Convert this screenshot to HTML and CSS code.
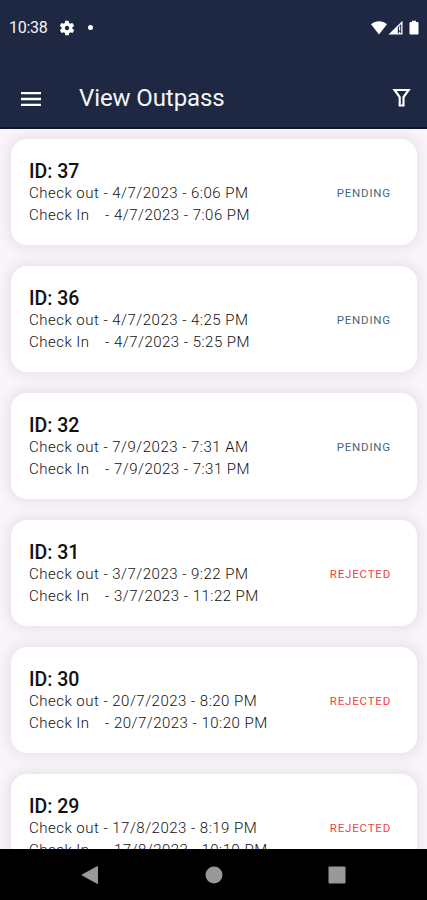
FILE: index.html
```html
<!DOCTYPE html>
<html lang="en">
<head>
    <meta charset="UTF-8">
    <meta name="viewport" content="width=device-width, initial-scale=1.0">
    <title>View Outpass</title>
    <link rel="stylesheet" href="styles.css">
</head>
<body>

    <div class="screen">
        <header class="header">
            <div class="status-bar">
                <span class="time">10:38</span>
                <svg class="gear" width="16" height="16" viewBox="1 1 22 22"><path fill="#fff" fill-rule="evenodd" d="M19.4 13a7.5 7.5 0 0 0 0-2l2.1-1.6c.2-.2.3-.5.1-.7l-2-3.4c-.1-.2-.4-.3-.6-.2l-2.5 1a7 7 0 0 0-1.7-1l-.4-2.6a.5.5 0 0 0-.5-.5h-4a.5.5 0 0 0-.5.5L9.1 5.1a7 7 0 0 0-1.7 1l-2.5-1c-.2-.1-.5 0-.6.2l-2 3.4c-.1.2-.1.5.1.7L4.6 11a7.5 7.5 0 0 0 0 2l-2.1 1.6c-.2.2-.3.5-.1.7l2 3.4c.1.2.4.3.6.2l2.5-1a7 7 0 0 0 1.7 1l.4 2.6c0 .3.2.5.5.5h4c.3 0 .5-.2.5-.5l.4-2.6a7 7 0 0 0 1.7-1l2.5 1c.2.1.5 0 .6-.2l2-3.4c.1-.2.1-.5-.1-.7zM12 15a3 3 0 1 1 0-6 3 3 0 0 1 0 6z"/></svg>
                <span class="dot"></span>
                <svg class="signals" width="50" height="16" viewBox="0 0 50 16">
                    <path fill="#fff" d="M1 4.2C5.5.2 12.5.2 17 4.2L9 14.5z"/>
                    <path fill="#fff" fill-rule="evenodd" d="M18.500 14.500L32.500.800V14.500zM27.800 7.200V13.200H31.200V3.900z"/>
                    <path fill="#fff" d="M29 6.500h1.200v4H29zM29 11.700h1.200v1.500H29z"/>
                    <path fill="#fff" d="M39.500 3q0-1 1-1H42V.800h4V2h1.500q1 0 1 1V13.500q0 1-1 1h-7q-1 0-1-1z"/>
                </svg>
            </div>
            <div class="toolbar">
                <svg class="menu-icon" width="20" height="16" viewBox="0 0 20 16"><path stroke="#fff" stroke-width="2.3" d="M0 2.2h20M0 8h20M0 13.8h20"/></svg>
                <h1>View Outpass</h1>
                <svg class="filter-icon" width="20" height="20" viewBox="0 0 20 20"><path fill="none" stroke="#fff" stroke-width="2.2" d="M2.6 2H16.6L11.5 9V17.5H7.7V9z"/></svg>
            </div>
        </header>

        <main class="outpass-list">
            <div class="card">
                <div class="details">
                    <h2>ID: 37</h2>
                    <p>Check out - 4/7/2023 - 6:06 PM</p>
                    <p><span class="label-in">Check In</span>- 4/7/2023 - 7:06 PM</p>
                </div>
                <span class="status pending">PENDING</span>
            </div>
            <div class="card">
                <div class="details">
                    <h2>ID: 36</h2>
                    <p>Check out - 4/7/2023 - 4:25 PM</p>
                    <p><span class="label-in">Check In</span>- 4/7/2023 - 5:25 PM</p>
                </div>
                <span class="status pending">PENDING</span>
            </div>
            <div class="card">
                <div class="details">
                    <h2>ID: 32</h2>
                    <p>Check out - 7/9/2023 - 7:31 AM</p>
                    <p><span class="label-in">Check In</span>- 7/9/2023 - 7:31 PM</p>
                </div>
                <span class="status pending">PENDING</span>
            </div>
            <div class="card">
                <div class="details">
                    <h2>ID: 31</h2>
                    <p>Check out - 3/7/2023 - 9:22 PM</p>
                    <p><span class="label-in">Check In</span>- 3/7/2023 - 11:22 PM</p>
                </div>
                <span class="status rejected">REJECTED</span>
            </div>
            <div class="card">
                <div class="details">
                    <h2>ID: 30</h2>
                    <p>Check out - 20/7/2023 - 8:20 PM</p>
                    <p><span class="label-in">Check In</span>- 20/7/2023 - 10:20 PM</p>
                </div>
                <span class="status rejected">REJECTED</span>
            </div>
            <div class="card">
                <div class="details">
                    <h2>ID: 29</h2>
                    <p>Check out - 17/8/2023 - 8:19 PM</p>
                    <p><span class="label-in">Check In</span>- 17/8/2023 - 10:19 PM</p>
                </div>
                <span class="status rejected">REJECTED</span>
            </div>
        </main>

        <nav class="system-nav">
            <svg width="18" height="20" viewBox="0 0 18 20"><path fill="#999" stroke="#999" stroke-linejoin="round" d="M1 10L16.5 1.5v17z"/></svg>
            <svg width="18" height="18" viewBox="0 0 18 18"><circle cx="9" cy="9" r="8.5" fill="#999"/></svg>
            <svg width="18" height="18" viewBox="0 0 18 18"><rect x=".5" y=".5" width="17" height="17" rx="1" fill="#999"/></svg>
        </nav>
    </div>

</body>
</html>
```

FILE: styles.css
```css
/* --- General --- */
:root {
    --header-color: #1e2843;
    --background-color: #f9f5fa;
    --pending-color: #45697e;
    --rejected-color: #f0443e;
}

* {
    box-sizing: border-box;
}

body {
    margin: 0;
    font-family: Roboto, sans-serif;
    overflow: hidden;
}

h1, h2, p {
    margin: 0;
}

.screen {
    display: flex;
    flex-direction: column;
    height: 900px;
}

/* --- Header --- */
.header {
    flex: none;
    height: 129px;
    background-color: var(--header-color);
    border-bottom: 2px solid #10172b;
    color: #f4f5f7;
}

.status-bar {
    display: flex;
    align-items: center;
    height: 55px;
    padding: 0 7px 0 9px;
}

.time {
    width: 50px;
    font-size: 16px;
    letter-spacing: -0.3px;
}

.dot {
    width: 5px;
    height: 5px;
    margin-left: 13px;
    border-radius: 50%;
    background-color: white;
}

.signals {
    margin-left: auto;
}

.toolbar {
    display: flex;
    align-items: center;
    height: 72px;
    padding: 14px 15px 0 21px;
}

.toolbar h1 {
    margin-left: 38px;
    font-size: 24px;
    font-weight: 400;
    letter-spacing: -0.1px;
}

.menu-icon {
    margin-top: 1px;
}

.filter-icon {
    margin-left: auto;
}

/* --- Outpass cards --- */
.outpass-list {
    flex: 1;
    min-height: 0;
    display: flex;
    flex-direction: column;
    gap: 21px;
    padding: 10px 10px 0 11px;
    background-color: var(--background-color);
    overflow: hidden;
}

.card {
    flex: none;
    display: flex;
    justify-content: space-between;
    align-items: center;
    height: 106px;
    padding: 1px 26px 0 18px;
    border-radius: 16px;
    background-color: white;
    box-shadow: 0 0 12px 4px rgba(50, 50, 60, 0.09);
}

.details h2 {
    padding-top: 1px;
    font-size: 19.5px;
    font-weight: 500;
    line-height: 21px;
    color: #111;
}

.details p {
    font-size: 15px;
    font-weight: 300;
    line-height: 22px;
    letter-spacing: 0.48px;
    color: #111;
    white-space: nowrap;
}

.label-in {
    display: inline-block;
    width: 76px;
}

.status {
    font-size: 11.5px;
    letter-spacing: 0.8px;
}

.pending {
    color: var(--pending-color);
}

.rejected {
    color: var(--rejected-color);
}

/* --- System navigation --- */
.system-nav {
    flex: none;
    display: flex;
    justify-content: space-between;
    align-items: center;
    height: 51px;
    padding: 0 81px;
    background-color: black;
}
```
